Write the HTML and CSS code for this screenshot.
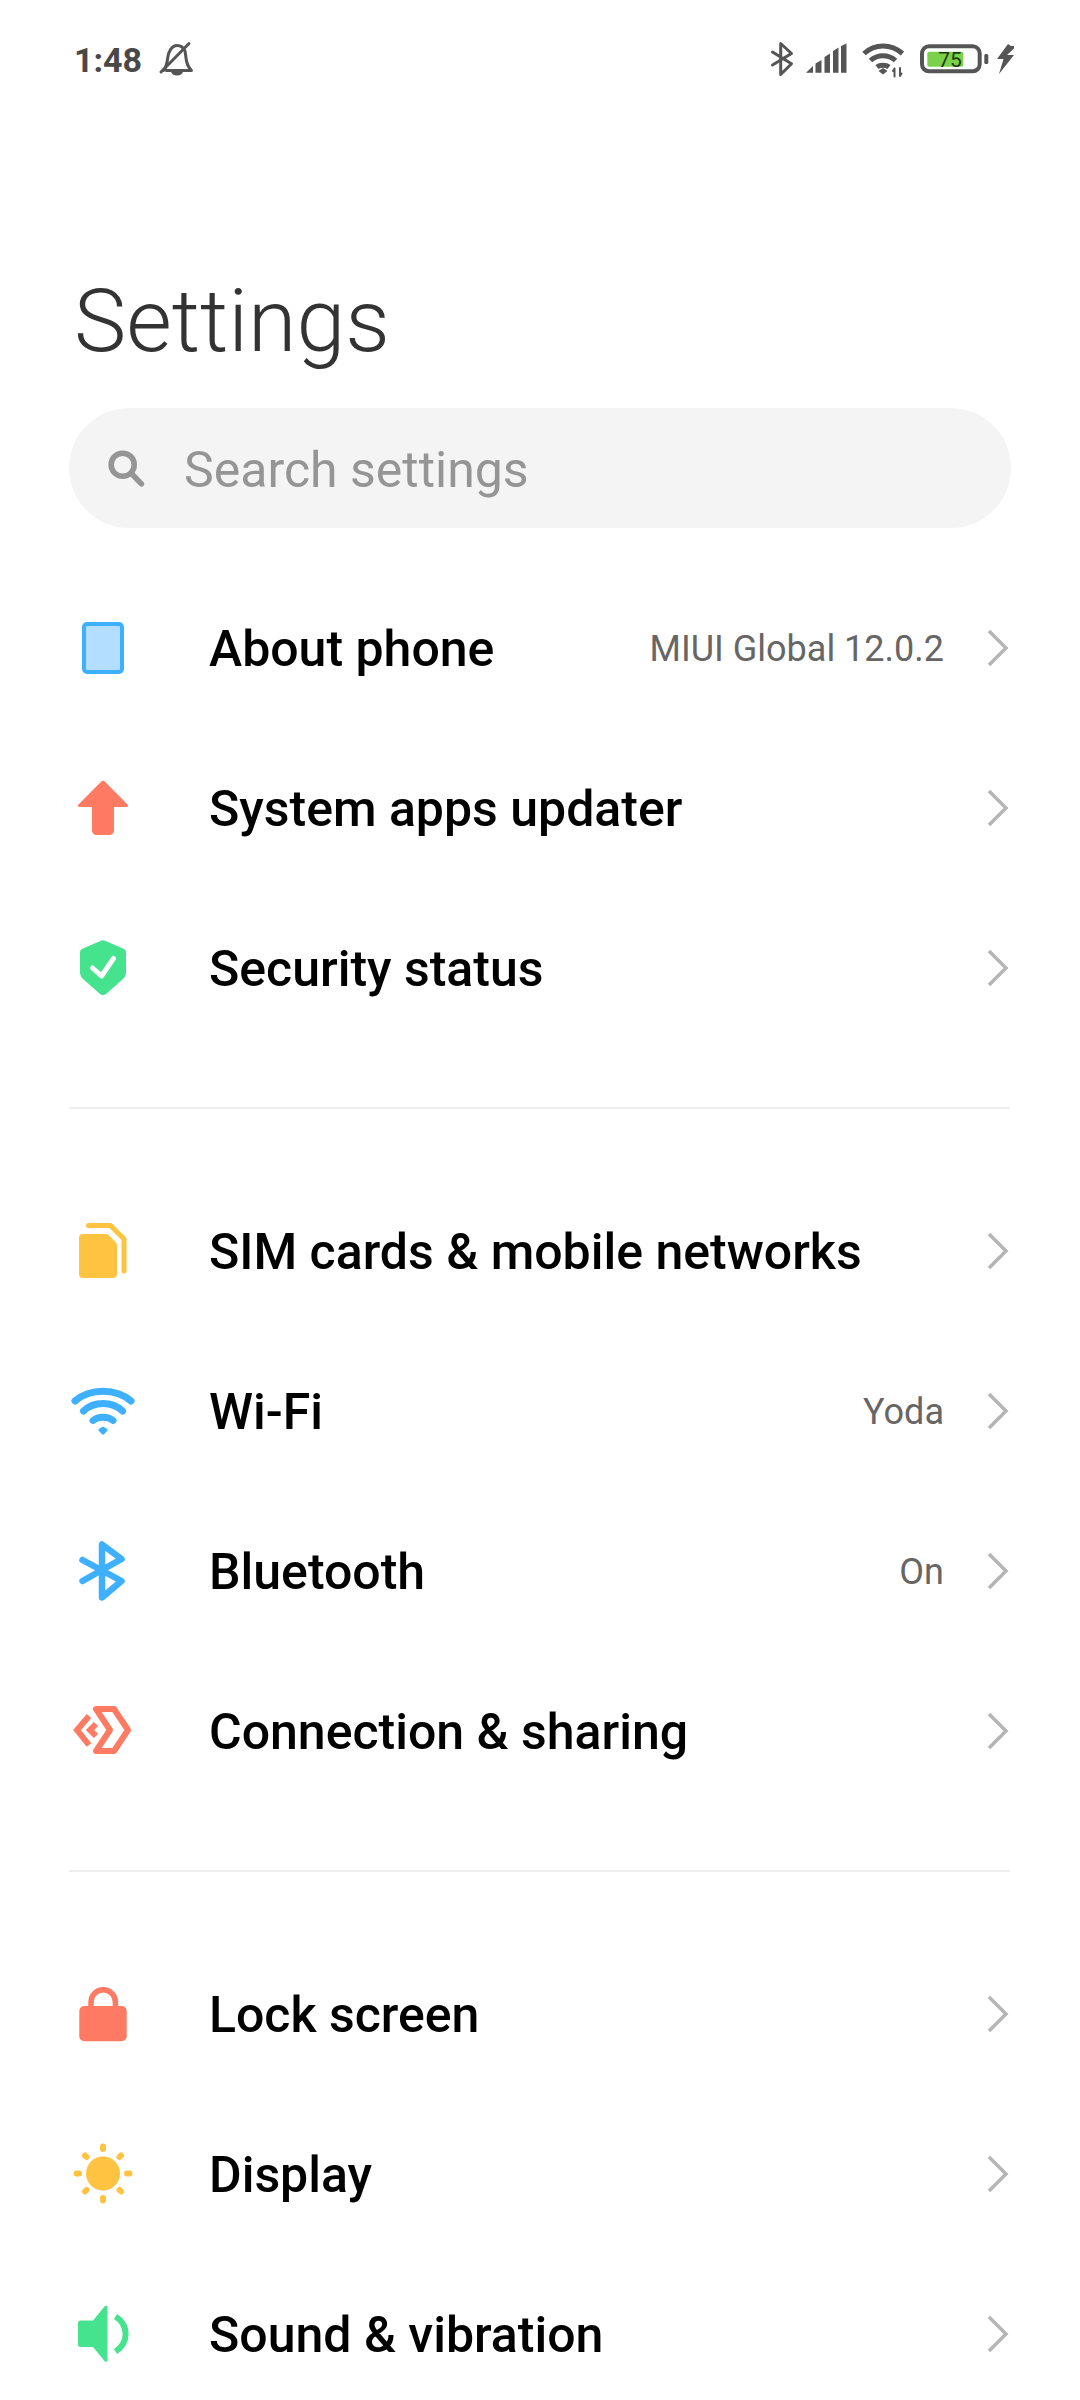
FILE: index.html
```html
<!DOCTYPE html>
<html lang="en">
<head>
<meta charset="utf-8">
<title>Settings</title>
<link rel="stylesheet" href="styles.css">
</head>
<body>
<div class="page">
  <header class="status">
    <div class="status-left">
      <span class="time">1:48</span>
      <svg class="st-bell" viewBox="0 0 40 40"><path class="st-line" d="M6.500 30.500c3-3.500 3.500-7 4.200-12.500C11.500 11 15 5.500 20 5.500c3.500 0 6.500 2 8 5.500l1 7c.5 5 2 9 5.500 12.500H9.500"/><path class="st-line" d="M4 32 32 3.500"/><path class="st-fill" d="M14 32h12c-1 2.500-3 3.500-6 3.500s-5-1-6-3.500z"/></svg>
    </div>
    <div class="status-right">
      <svg class="st-bt" viewBox="0 0 24 40"><path class="st-line" d="M2.500 25 21.500 13.500 10.700 3.500v31l10.800-10.700L2.500 12"/></svg>
      <svg class="st-signal" viewBox="0 0 44 40"><path class="st-fill" d="M2 32.700 9 26v6.700zM11.500 32.700V23.500l6-3.500v12.700zM20.500 32.700V17l5.500-3.500v19.200zM29 32.700V11l5.500-3.500v25.200zM37 32.700V6l5.500-2.500v29.200z"/></svg>
      <svg class="st-wifi" viewBox="0 0 46 40"><path class="st-line st-thick" d="M4 13.500C15 3.500 31 3.500 42.500 13.500M10.500 20.500C17.500 14 28.500 14 35.500 20.500M17 27C20 24.500 26 24.500 29 27"/><path class="st-fill" d="M18.500 31 23 28l4.500 3-4.500 3.500z"/><path class="st-line st-thin" d="M34.500 28.500v8M33 31l1.500-2.500M40 28v8M40 36l1.500-2.500"/></svg>
      <svg class="st-batt" viewBox="0 0 72 40"><rect class="batt-shell" x="4" y="6.300" width="57.700" height="25" rx="7"/><rect class="batt-level" x="9.300" y="11.700" width="36" height="15" rx="2"/><rect class="st-fill" x="66.300" y="14" width="4" height="10" rx="1.500"/><text class="batt-text" x="32" y="26.700">75</text></svg>
      <svg class="st-bolt" viewBox="0 0 20 40"><path class="st-fill" d="M13 4 2 19h6.500L4 34 19 15h-7l7-6.500V6h-3z"/></svg>
    </div>
  </header>

  <h1 class="title">Settings</h1>

  <div class="search">
    <svg class="search-icon" viewBox="0 0 40 40"><circle cx="17" cy="17" r="10.500"/><path d="M25 25l9 9.500"/></svg>
    <span class="search-text">Search settings</span>
  </div>

  <section class="group">
    <div class="row">
      <svg class="icon" viewBox="0 0 80 80"><rect x="21" y="16" width="38" height="48" rx="3" fill="#b3deff" stroke="#3fb0ff" stroke-width="4"/></svg>
      <span class="label">About phone</span>
      <span class="value">MIUI Global 12.0.2</span>
      <svg class="chev" viewBox="0 0 24 40"><path d="M3 3 20 20 3 37"/></svg>
    </div>
    <div class="row">
      <svg class="icon" viewBox="0 0 80 80"><path fill="#ff7a63" d="M37.800 14a3 3 0 0 1 4.400 0l22.300 22.600c1.200 1.200.5 2.400-1 2.400H51v23c0 3-2 5-5 5H34c-3 0-5-2-5-5V39H16.500c-1.500 0-2.200-1.200-1-2.400z"/></svg>
      <span class="label">System apps updater</span>
      <svg class="chev" viewBox="0 0 24 40"><path d="M3 3 20 20 3 37"/></svg>
    </div>
    <div class="row">
      <svg class="icon" viewBox="0 0 80 80"><path fill="#46e38f" d="M38.500 12.500a4 4 0 0 1 3 0L60 20.500c2 .8 3 2 3 4V44c0 3-1 5-3 7L43 66a5 5 0 0 1-6 0L20 51c-2-2-3-4-3-7V24.500c0-2 1-3.200 3-4z"/><path d="M29.500 40 38.500 48 50.500 30.500" fill="none" stroke="#fff" stroke-width="5" stroke-linecap="round" stroke-linejoin="round"/></svg>
      <span class="label">Security status</span>
      <svg class="chev" viewBox="0 0 24 40"><path d="M3 3 20 20 3 37"/></svg>
    </div>
  </section>

  <hr class="divider">

  <section class="group">
    <div class="row">
      <svg class="icon" viewBox="0 0 80 80"><path fill="#ffc342" d="M20 23h23c1 0 2 .4 2.800 1.200l7 7c.8.800 1.200 1.800 1.200 2.800v29c0 2.500-1.500 4-4 4H20c-2.500 0-4-1.500-4-4V27c0-2.500 1.500-4 4-4z"/><path d="M25.500 14.500H47.500L61 28V60" fill="none" stroke="#ffc342" stroke-width="5" stroke-linecap="round" stroke-linejoin="round"/></svg>
      <span class="label">SIM cards &amp; mobile networks</span>
      <svg class="chev" viewBox="0 0 24 40"><path d="M3 3 20 20 3 37"/></svg>
    </div>
    <div class="row">
      <svg class="icon" viewBox="0 0 80 80"><path d="M12 30C27 17 53 17 68 30M20.500 40C31 30 49 30 59.500 40M30 49.500C35 45 45 45 50 49.500" fill="none" stroke="#3fb0ff" stroke-width="7" stroke-linecap="round"/><path fill="#3fb0ff" d="M36.500 57.500 40 55.500l3.500 2c1 .6 1.500 1.500.8 2.200L41 63.300a1.500 1.500 0 0 1-2 0L35.700 59.700c-.7-.7-.2-1.600.8-2.200z"/></svg>
      <span class="label">Wi-Fi</span>
      <span class="value">Yoda</span>
      <svg class="chev" viewBox="0 0 24 40"><path d="M3 3 20 20 3 37"/></svg>
    </div>
    <div class="row">
      <svg class="icon" viewBox="0 0 80 80"><path d="M19.500 50 58.500 28 39 13.500V66.500L58.500 50 19.500 29" fill="none" stroke="#3fb0ff" stroke-width="6.500" stroke-linecap="round" stroke-linejoin="round"/></svg>
      <span class="label">Bluetooth</span>
      <span class="value">On</span>
      <svg class="chev" viewBox="0 0 24 40"><path d="M3 3 20 20 3 37"/></svg>
    </div>
    <div class="row">
      <svg class="icon" viewBox="0 0 80 80"><path d="M33 18H51L65 39 51 60H33L47 39Z" fill="none" stroke="#ff7a63" stroke-width="6" stroke-linejoin="round"/><path d="M26 25 14 39 26 54M33 33 27 39 33 45" fill="none" stroke="#ff7a63" stroke-width="6"/></svg>
      <span class="label">Connection &amp; sharing</span>
      <svg class="chev" viewBox="0 0 24 40"><path d="M3 3 20 20 3 37"/></svg>
    </div>
  </section>

  <hr class="divider">

  <section class="group">
    <div class="row">
      <svg class="icon" viewBox="0 0 80 80"><path d="M28 34V28A12.200 12.200 0 0 1 52.400 28V34" fill="none" stroke="#ff7a63" stroke-width="5.500"/><rect x="16.300" y="32" width="47.400" height="35.300" rx="5" fill="#ff7a63"/></svg>
      <span class="label">Lock screen</span>
      <svg class="chev" viewBox="0 0 24 40"><path d="M3 3 20 20 3 37"/></svg>
    </div>
    <div class="row">
      <svg class="icon" viewBox="0 0 80 80"><circle cx="40" cy="39.500" r="17" fill="#ffc342"/><path d="M40 12.500V15M40 64V66.500M13.500 39.500H16M64 39.500H66.500M22 21.500 23.500 23M56.500 56 58 57.500M58 21.500 56.500 23M23.500 56 22 57.500" fill="none" stroke="#ffc342" stroke-width="6" stroke-linecap="round"/></svg>
      <span class="label">Display</span>
      <svg class="chev" viewBox="0 0 24 40"><path d="M3 3 20 20 3 37"/></svg>
    </div>
    <div class="row">
      <svg class="icon" viewBox="0 0 80 80"><path fill="#46e38f" d="M17.500 26.500H30L41.500 12.500c1.500-1.500 3-1 3 1V66c0 2-1.500 2.500-3 1L30 53H17.500c-1.500 0-2.500-1-2.500-2.500V29c0-1.500 1-2.500 2.500-2.500z"/><path d="M52.500 22.500C66 31 66 49 52.500 57.500" fill="none" stroke="#46e38f" stroke-width="6"/></svg>
      <span class="label">Sound &amp; vibration</span>
      <svg class="chev" viewBox="0 0 24 40"><path d="M3 3 20 20 3 37"/></svg>
    </div>
  </section>
</div>
</body>
</html>
```

FILE: styles.css
```css
* { box-sizing: border-box; }
html, body { margin: 0; padding: 0; background: #fff; }
body { width: 1080px; height: 2400px; overflow: hidden; font-family: Roboto, "Noto Sans", sans-serif; }
.page { width: 1080px; height: 2400px; overflow: hidden; }

.status { height: 120px; display: flex; justify-content: space-between; align-items: center; padding: 0 65px 0 74px; }
.status-left, .status-right { display: flex; align-items: center; }
.time { font-size: 34px; font-weight: 700; color: #484848; line-height: 40px; }
.status svg { height: 40px; display: block; flex: none; }
.st-bell { width: 40px; margin-left: 15px; }
.st-bt { width: 24px; }
.st-signal { width: 44px; margin-left: 10px; }
.st-wifi { width: 46px; margin-left: 12px; }
.st-batt { width: 72px; margin-left: 12px; }
.st-bolt { width: 20px; margin-left: 5px; }
.st-line { fill: none; stroke: #555; stroke-width: 3; stroke-linejoin: round; stroke-linecap: round; }
.st-thick { stroke-width: 5; stroke-linecap: butt; }
.st-thin { stroke-width: 2; }
.st-fill { fill: #555; }
.batt-shell { fill: none; stroke: #555; stroke-width: 4; }
.batt-level { fill: #7bd14a; }
.batt-text { font-family: Roboto, sans-serif; font-size: 21px; fill: #1d3d10; text-anchor: middle; }

.title { margin: 0; height: 288px; padding: 151px 0 0 74px; font-size: 88px; line-height: 100px; font-weight: 300; color: #333; }

.search { height: 120px; margin: 0 69px; border-radius: 60px; background: #f4f4f4; display: flex; align-items: center; padding-left: 35px; }
.search-icon { width: 44px; height: 44px; flex: none; fill: none; stroke: #959595; stroke-width: 5; stroke-linecap: round; }
.search-text { margin-left: 36px; padding-top: 4px; font-size: 50px; line-height: 60px; color: #959595; }

.group { display: flex; flex-direction: column; }
.search + .group { margin-top: 40px; }
.row { height: 160px; flex: none; display: flex; align-items: center; padding: 0 70px 0 63px; }
.icon { width: 80px; height: 80px; flex: none; }
.label { margin-left: 66px; padding-top: 2px; font-size: 50px; font-weight: 500; color: #000; flex: 1; white-space: nowrap; }
.value { font-size: 36px; color: #666; margin-right: 42px; padding-top: 2px; white-space: nowrap; }
.chev { width: 24px; height: 40px; flex: none; fill: none; stroke: #b5b5b5; stroke-width: 3.500; margin-right: 0; }

.divider { margin: 59px 70px 62px 69px; border: 0; height: 2px; background: #eeeeee; }
```
